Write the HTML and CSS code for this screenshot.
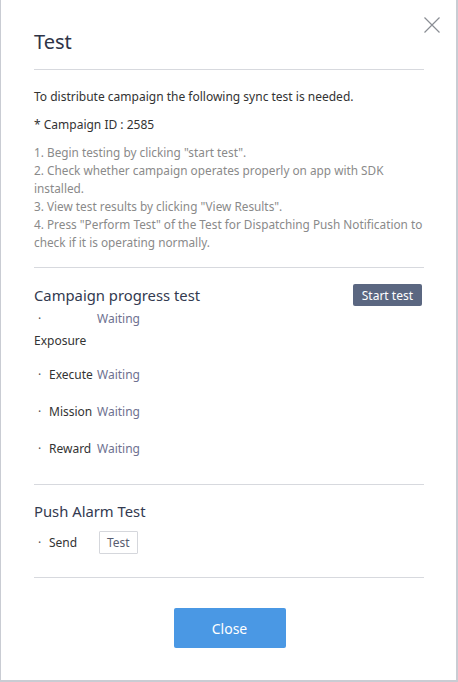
FILE: index.html
```html
<!DOCTYPE html>
<html>
<head>
<meta charset="utf-8">
<link rel="stylesheet" href="styles.css">
</head>
<body>
<div class="modal">
  <button class="close" aria-label="close">
    <svg width="16" height="16" viewBox="0 0 16 16"><path d="M0.5 0.5 L15.5 15.5 M15.5 0.5 L0.5 15.5" stroke="#8a8d94" stroke-width="1.2" fill="none"/></svg>
  </button>
  <h1 class="title">Test</h1>
  <div class="divider"></div>
  <p class="intro">To distribute campaign the following sync test is needed.</p>
  <p class="cid">* Campaign ID : 2585</p>
  <div class="steps">
    <p>1. Begin testing by clicking "start test".</p>
    <p>2. Check whether campaign operates properly on app with SDK installed.</p>
    <p>3. View test results by clicking "View Results".</p>
    <p>4. Press "Perform Test" of the Test for Dispatching Push Notification to check if it is operating normally.</p>
  </div>
  <div class="divider"></div>
  <section class="section progress">
    <div class="sec-head">
      <h2 class="sec-title">Campaign progress test</h2>
      <button class="btn-start">Start test</button>
    </div>
    <ul class="checks">
      <li class="check check-wrap">
        <div class="check-line"><span class="dot">·</span><span class="label"></span><span class="status">Waiting</span></div>
        <div class="wrapped">Exposure</div>
      </li>
      <li class="check"><div class="check-line"><span class="dot">·</span><span class="label">Execute</span><span class="status">Waiting</span></div></li>
      <li class="check"><div class="check-line"><span class="dot">·</span><span class="label">Mission</span><span class="status">Waiting</span></div></li>
      <li class="check"><div class="check-line"><span class="dot">·</span><span class="label">Reward</span><span class="status">Waiting</span></div></li>
    </ul>
  </section>
  <div class="divider"></div>
  <section class="section push">
    <h2 class="sec-title">Push Alarm Test</h2>
    <div class="check-line send"><span class="dot">·</span><span class="label">Send</span><button class="btn-test">Test</button></div>
  </section>
  <div class="divider"></div>
  <div class="footer"><button class="btn-close">Close</button></div>
</div>
</body>
</html>
```
FILE: styles.css
```css
* { box-sizing: border-box; }
html, body { margin: 0; padding: 0; background: #fff; }
body { font-family: "Noto Sans", "Liberation Sans", sans-serif; color: #333; }
p, h1, h2, ul { margin: 0; padding: 0; }
ul { list-style: none; }
button { font-family: inherit; cursor: pointer; }

.modal {
  position: relative;
  width: 458px;
  height: 682px;
  border-left: 1px solid #c9ccd3;
  border-right: 2px solid #c9ccd3;
  border-bottom: 2px solid #c9ccd3;
  padding: 28px 32px 0 33px;
  background: #fff;
}
.close {
  position: absolute;
  top: 17px;
  right: 16px;
  width: 16px;
  height: 16px;
  padding: 0;
  border: 0;
  background: none;
  display: block;
}
.close svg { display: block; }

.title {
  font-size: 20px;
  font-weight: 400;
  line-height: 28px;
  color: #2e3447;
  margin-bottom: 13px;
}
.divider { height: 1px; background: #d7d9de; }

.intro { font-size: 12px; line-height: 18px; margin-top: 18px; color: #333; }
.cid { font-size: 12px; line-height: 18px; margin-top: 10px; color: #333; }
.steps { margin-top: 9px; margin-bottom: 16px; }
.steps p { font-size: 11.8px; line-height: 18px; color: #8a8a8a; }

.section { padding-top: 14px; }
.progress { padding-top: 15px; }
.sec-head { display: flex; justify-content: space-between; align-items: center; }
.sec-title { font-size: 14.8px; font-weight: 400; line-height: 24px; color: #333a50; }
.btn-start {
  background: #5b6781;
  color: #fff;
  border: 0;
  border-radius: 2px;
  font-size: 12px;
  height: 22px;
  padding: 0 9px;
  margin-right: 2px;
}

.checks { margin-top: 3px; padding-bottom: 7px; }
.check { margin-bottom: 19px; }
.check-wrap { margin-bottom: 16px; }
.check-line { display: flex; align-items: center; font-size: 12px; line-height: 18px; }
.dot { width: 15px; padding-left: 4px; color: #555; }
.label { width: 48px; color: #333; }
.status { color: #6e7190; }
.wrapped { font-size: 12px; line-height: 18px; margin-top: 4px; color: #333; }

.push { padding-bottom: 23px; }
.send { margin-top: 8px; }
.btn-test {
  background: #fff;
  border: 1px solid #d5d7dc;
  border-radius: 1px;
  color: #585d70;
  font-size: 12px;
  height: 23px;
  padding: 0 7px;
  margin-left: 2px;
}
.footer { display: flex; justify-content: center; padding-top: 30px; }
.btn-close {
  width: 112px;
  height: 40px;
  background: #4a98e4;
  color: #fff;
  border: 0;
  border-radius: 2px;
  font-size: 14px;
  margin-left: 1px;
}
```
